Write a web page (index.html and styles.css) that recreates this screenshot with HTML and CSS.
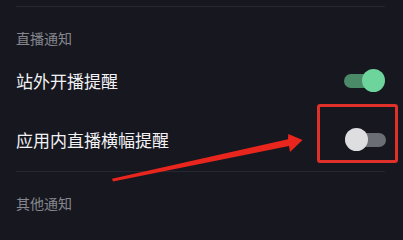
FILE: index.html
```html
<!DOCTYPE html>
<html lang="zh">
<head>
<meta charset="utf-8">
<link rel="stylesheet" href="styles.css">
</head>
<body>
<div class="page">
  <div class="divider top"></div>
  <div class="section-title first">直播通知</div>
  <div class="row">
    <span class="label">站外开播提醒</span>
    <span class="toggle on"><span class="track"></span><span class="knob"></span></span>
  </div>
  <div class="row second">
    <span class="label">应用内直播横幅提醒</span>
    <span class="toggle off"><span class="track"></span><span class="knob"></span></span>
  </div>
  <div class="divider"></div>
  <div class="section-title">其他通知</div>

  <div class="highlight"></div>
  <svg class="arrow" width="403" height="236" viewBox="0 0 403 236">
    <polygon points="112,178.8 288,139.3 288.3,134 302.5,140 290,152 289,146 113,181.6" fill="#e8261d"/>
  </svg>
</div>
</body>
</html>
```

FILE: styles.css
```css
html, body {
  margin: 0;
  padding: 0;
  background: #16171f;
}
.page {
  position: relative;
  width: 403px;
  height: 236px;
  overflow: hidden;
  padding: 0 18px 0 16px;
  box-sizing: border-box;
  font-family: "Noto Sans CJK SC", "Noto Sans", sans-serif;
}
.divider {
  height: 1px;
  background: #262830;
  margin-top: 2px;
}
.divider.top {
  margin-top: 6px;
}
.section-title {
  font-size: 14px;
  line-height: 20px;
  color: #85878d;
  padding-top: 21px;
}
.section-title.first {
  padding-bottom: 3px;
}
.row {
  height: 59px;
  display: flex;
  align-items: center;
  justify-content: space-between;
}
.label {
  font-size: 17px;
  color: #f2f2f4;
  line-height: 24px;
}
.toggle {
  position: relative;
  width: 41px;
  height: 23px;
  display: flex;
  align-items: center;
  margin-right: 0;
}
.track {
  width: 100%;
  height: 14px;
  border-radius: 7px;
}
.knob {
  position: absolute;
  top: 0;
  width: 23px;
  height: 23px;
  border-radius: 50%;
}
.toggle.on .track {
  background: #4b8a69;
  width: 34px;
}
.toggle.on .knob {
  right: 0;
  background: #6dd59c;
}
.toggle.off {
  margin-right: -1px;
}
.toggle.off .track {
  background: #6b6e74;
}
.toggle.off .knob {
  left: 0;
  background: #dedee0;
}
.highlight {
  position: absolute;
  left: 317px;
  top: 104px;
  width: 81px;
  height: 59px;
  box-sizing: border-box;
  border: 3px solid #e0302a;
  border-radius: 3px;
}
.arrow {
  position: absolute;
  left: 0;
  top: 0;
}
```
